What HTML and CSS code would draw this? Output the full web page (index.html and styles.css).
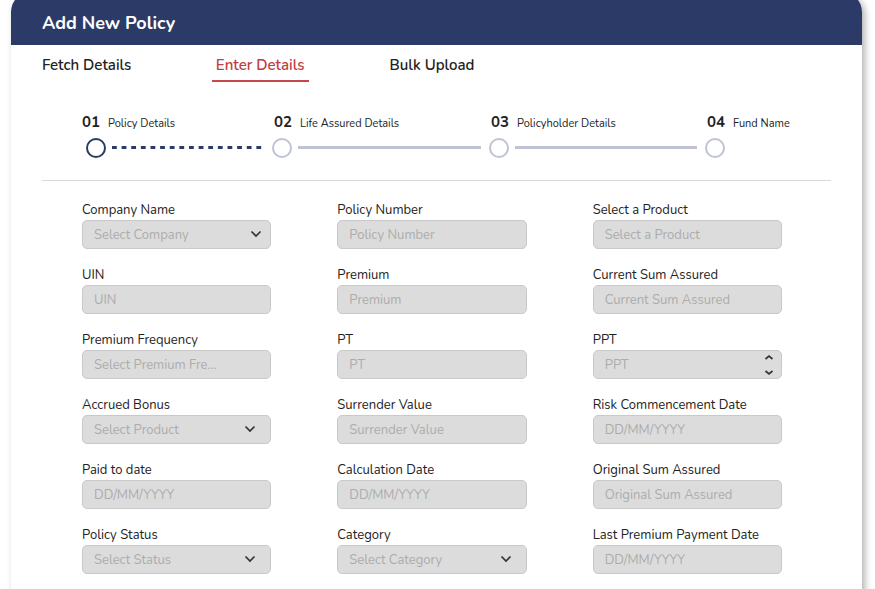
FILE: index.html
```
<!DOCTYPE html>
<html lang="en">
<head>
<meta charset="utf-8">
<meta name="viewport" content="width=device-width, initial-scale=1">
<title>Add New Policy</title>
<link rel="stylesheet" href="styles.css">
</head>
<body>
<svg class="defs" aria-hidden="true">
  <symbol id="chevron" viewBox="0 0 12 8"><path d="M1.500 1.500 6 6l4.500-4.500"/></symbol>
  <symbol id="spin" viewBox="0 0 10 22"><path d="M1.500 5 5 2l3.500 3M1.500 17 5 20l3.500-3"/></symbol>
</svg>
<main class="card">
  <header class="card-header"><h1>Add New Policy</h1></header>
  <nav class="tabs">
    <button type="button" class="tab">Fetch Details</button>
    <button type="button" class="tab active">Enter Details</button>
    <button type="button" class="tab">Bulk Upload</button>
  </nav>
  <ol class="steps">
    <li class="step current">
      <p class="step-title"><b>01</b><span>Policy Details</span></p>
      <div class="track"><i class="dot"></i><i class="line"></i></div>
    </li>
    <li class="step">
      <p class="step-title"><b>02</b><span>Life Assured Details</span></p>
      <div class="track"><i class="dot"></i><i class="line"></i></div>
    </li>
    <li class="step">
      <p class="step-title"><b>03</b><span>Policyholder Details</span></p>
      <div class="track"><i class="dot"></i><i class="line"></i></div>
    </li>
    <li class="step">
      <p class="step-title"><b>04</b><span>Fund Name</span></p>
      <div class="track"><i class="dot"></i></div>
    </li>
  </ol>
  <form class="fields">
    <div class="field"><label for="company">Company Name</label><div class="control"><select id="company"><option>Select Company</option></select><svg class="chevron near"><use href="#chevron"/></svg></div></div>
    <div class="field"><label for="number">Policy Number</label><input id="number" type="text" placeholder="Policy Number"></div>
    <div class="field"><label for="product">Select a Product</label><select id="product"><option>Select a Product</option></select></div>

    <div class="field"><label for="uin">UIN</label><input id="uin" type="text" placeholder="UIN"></div>
    <div class="field"><label for="premium">Premium</label><input id="premium" type="text" placeholder="Premium"></div>
    <div class="field"><label for="current-sum">Current Sum Assured</label><input id="current-sum" type="text" placeholder="Current Sum Assured"></div>

    <div class="field"><label for="frequency">Premium Frequency</label><select id="frequency"><option>Select Premium Fre...</option></select></div>
    <div class="field"><label for="pt">PT</label><input id="pt" type="text" placeholder="PT"></div>
    <div class="field"><label for="ppt">PPT</label><div class="control"><input id="ppt" type="number" placeholder="PPT"><svg class="spin"><use href="#spin"/></svg></div></div>

    <div class="field"><label for="bonus">Accrued Bonus</label><div class="control"><select id="bonus"><option>Select Product</option></select><svg class="chevron"><use href="#chevron"/></svg></div></div>
    <div class="field"><label for="surrender">Surrender Value</label><input id="surrender" type="text" placeholder="Surrender Value"></div>
    <div class="field"><label for="risk">Risk Commencement Date</label><input id="risk" type="text" placeholder="DD/MM/YYYY"></div>

    <div class="field"><label for="paid">Paid to date</label><input id="paid" type="text" placeholder="DD/MM/YYYY"></div>
    <div class="field"><label for="calculation">Calculation Date</label><input id="calculation" type="text" placeholder="DD/MM/YYYY"></div>
    <div class="field"><label for="original-sum">Original Sum Assured</label><input id="original-sum" type="text" placeholder="Original Sum Assured"></div>

    <div class="field"><label for="status">Policy Status</label><div class="control"><select id="status"><option>Select Status</option></select><svg class="chevron"><use href="#chevron"/></svg></div></div>
    <div class="field"><label for="category">Category</label><div class="control"><select id="category"><option>Select Category</option></select><svg class="chevron"><use href="#chevron"/></svg></div></div>
    <div class="field"><label for="last-payment">Last Premium Payment Date</label><input id="last-payment" type="text" placeholder="DD/MM/YYYY"></div>
  </form>
</main>
</body>
</html>
```
FILE: styles.css
```
* { box-sizing: border-box; }
body {
  margin: 0;
  background: #fff;
  color: #222;
  font-family: Nunito, Lato, "Open Sans", sans-serif;
  overflow-x: hidden;
}
.defs { position: absolute; width: 0; height: 0; }
.card {
  margin: -8px 13px 0 11px;
  padding-bottom: 32px;
  border-radius: 20px 20px 0 0;
  background: #fff;
  box-shadow: 3px 3px 7px rgba(0, 0, 0, .3);
}
.card-header {
  padding: 19px 31px 10px;
  border-radius: 20px 20px 0 0;
  background: #2c3a67;
  color: #fff;
}
h1 { margin: 0; font-size: 18px; line-height: 24px; font-weight: 700; }

.tabs {
  display: grid;
  grid-template-columns: repeat(3, 22%);
  justify-items: start;
  padding: 8px 34px 0 27px;
}
.tab {
  padding: 0 4px 3px;
  border: 0;
  border-bottom: 2px solid transparent;
  background: none;
  color: #222;
  font: 600 15px/24px Nunito, Lato, "Open Sans", sans-serif;
}
.tab.active { color: #c33d3f; border-color: #c9474b; }

.steps {
  display: grid;
  grid-template-columns: 190fr 217fr 216fr 86fr;
  margin: 0 31px;
  padding: 30px 40px 22px 40px;
  border-bottom: 1px solid #d9d9d9;
  list-style: none;
}
.step-title {
  display: flex;
  align-items: baseline;
  gap: 8px;
  margin: 0;
  padding-left: 2px;
  line-height: 20px;
  white-space: nowrap;
}
.step-title b { font-size: 15px; }
.step-title span { font-size: 11px; }
.track { display: flex; align-items: center; margin-top: 4px; }
.dot { width: 20px; height: 20px; border: 2px solid #bfc3d5; border-radius: 50%; }
.line { flex: 1; height: 3px; margin: 0 8px 2px 6px; background: #bfc3d5; }
.current .step-title { padding-left: 0; }
.current .track { padding-left: 4px; }
.current .dot { border-color: #2c3a67; }
.current .line {
  margin-right: 6px;
  background: linear-gradient(90deg, #2c3a67 5px, transparent 5px) 0 0 / 6.25% 100%;
}

.fields {
  display: grid;
  grid-template-columns: repeat(3, 1fr);
  gap: 17px 66px;
  padding: 20px 80px 0 71px;
}
.field { display: flex; flex-direction: column; gap: 1px; min-width: 0; }
label { font-size: 13px; line-height: 18px; }
.control { position: relative; display: flex; }
input, select {
  width: 100%;
  height: 29px;
  margin: 0;
  padding: 0 11px;
  border: 1px solid #c9c9c9;
  border-radius: 5px;
  background: #dcdcdc;
  color: #acacac;
  font: 13px Nunito, Lato, "Open Sans", sans-serif;
  appearance: none;
}
input::placeholder { color: #acacac; opacity: 1; }
input[type="number"] { appearance: textfield; }
.chevron, .spin {
  position: absolute;
  fill: none;
  stroke: #333;
  stroke-width: 1.700;
  pointer-events: none;
}
.chevron { width: 12px; height: 8px; top: 10px; right: 15px; }
.chevron.near { right: 9px; }
.spin { width: 10px; height: 22px; top: 4px; right: 8px; }
```
